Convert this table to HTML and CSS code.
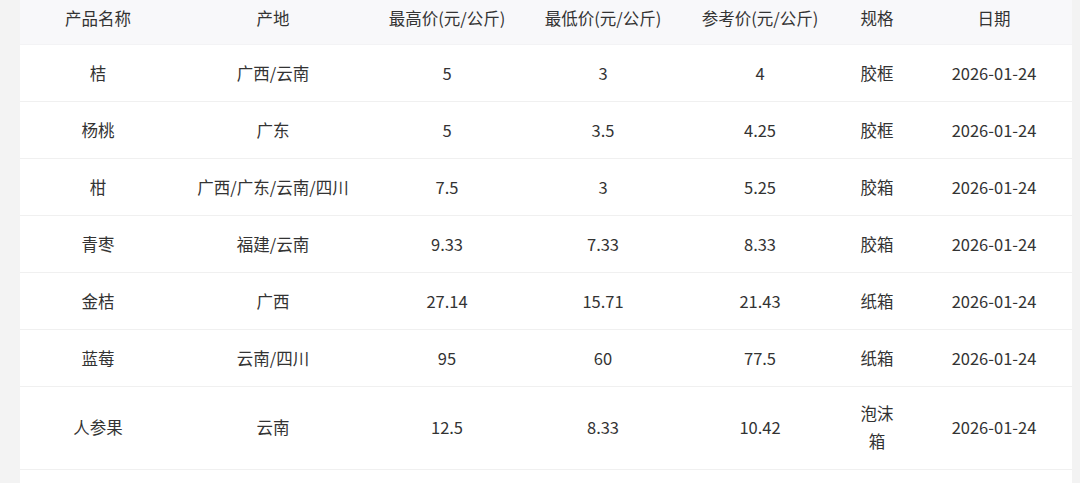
FILE: index.html
```html
<!DOCTYPE html>
<html lang="zh-CN">
<head>
<meta charset="utf-8">
<title>价格表</title>
<link rel="stylesheet" href="styles.css">
</head>
<body>
<div class="page">
  <table class="price-table">
    <colgroup>
      <col class="c1"><col class="c2"><col class="c3"><col class="c4"><col class="c5"><col class="c6"><col class="c7">
    </colgroup>
    <thead>
      <tr>
        <th>产品名称</th><th>产地</th><th>最高价(元/公斤)</th><th>最低价(元/公斤)</th><th>参考价(元/公斤)</th><th>规格</th><th>日期</th>
      </tr>
    </thead>
    <tbody>
      <tr><td>桔</td><td>广西/云南</td><td>5</td><td>3</td><td>4</td><td>胶框</td><td>2026-01-24</td></tr>
      <tr><td>杨桃</td><td>广东</td><td>5</td><td>3.5</td><td>4.25</td><td>胶框</td><td>2026-01-24</td></tr>
      <tr><td>柑</td><td>广西/广东/云南/四川</td><td>7.5</td><td>3</td><td>5.25</td><td>胶箱</td><td>2026-01-24</td></tr>
      <tr><td>青枣</td><td>福建/云南</td><td>9.33</td><td>7.33</td><td>8.33</td><td>胶箱</td><td>2026-01-24</td></tr>
      <tr><td>金桔</td><td>广西</td><td>27.14</td><td>15.71</td><td>21.43</td><td>纸箱</td><td>2026-01-24</td></tr>
      <tr><td>蓝莓</td><td>云南/四川</td><td>95</td><td>60</td><td>77.5</td><td>纸箱</td><td>2026-01-24</td></tr>
      <tr class="tall"><td>人参果</td><td>云南</td><td>12.5</td><td>8.33</td><td>10.42</td><td>泡沫<br>箱</td><td>2026-01-24</td></tr>
      <tr><td>&nbsp;</td><td></td><td></td><td></td><td></td><td></td><td></td></tr>
    </tbody>
  </table>
</div>
</body>
</html>
```
FILE: styles.css
```css
html, body {
  margin: 0;
  padding: 0;
  background: #f3f3f3;
  overflow: hidden;
}
.page {
  padding: 0 8px 0 20px;
  margin-top: -12px;
}
.price-table {
  width: 1052px;
  border-collapse: collapse;
  table-layout: fixed;
  background: #ffffff;
  font-family: "Noto Sans CJK SC", "Noto Sans", sans-serif;
  font-size: 16.5px;
  color: #333333;
}
.c1 { width: 156px; }
.c2 { width: 194px; }
.c3 { width: 154px; }
.c4 { width: 158px; }
.c5 { width: 156px; }
.c6 { width: 78px; }
.c7 { width: 156px; }
.price-table th,
.price-table td {
  text-align: center;
  vertical-align: middle;
  line-height: 28px;
  padding: 14px 4px 14px;
  border-bottom: 1px solid #f0f0f0;
  font-weight: normal;
  white-space: nowrap;
}
.price-table td:nth-child(6) { white-space: normal; }
.price-table tr.tall td {
  padding-top: 12px;
  padding-bottom: 14px;
}
.price-table thead th {
  background: #f8f8fa;
  border-bottom: 1px solid #f3f3f5;
  padding: 16px 4px 12px;
}
```
